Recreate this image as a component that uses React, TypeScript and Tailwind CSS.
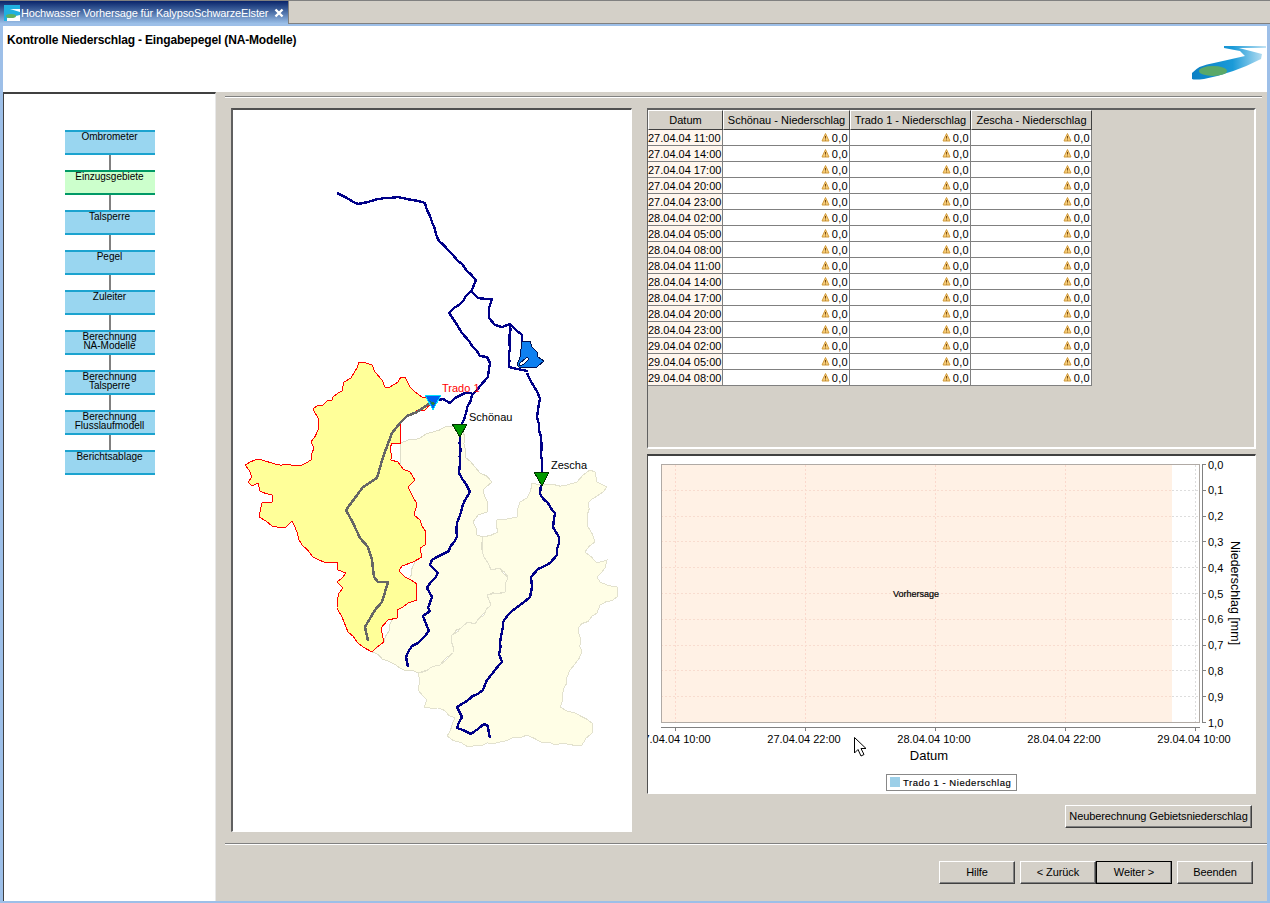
import React from "react";

const steps = [
  ["Ombrometer"],
  ["Einzugsgebiete"],
  ["Talsperre"],
  ["Pegel"],
  ["Zuleiter"],
  ["Berechnung", "NA-Modelle"],
  ["Berechnung", "Talsperre"],
  ["Berechnung", "Flusslaufmodell"],
  ["Berichtsablage"],
];

const dates = [
  "27.04.04 11:00",
  "27.04.04 14:00",
  "27.04.04 17:00",
  "27.04.04 20:00",
  "27.04.04 23:00",
  "28.04.04 02:00",
  "28.04.04 05:00",
  "28.04.04 08:00",
  "28.04.04 11:00",
  "28.04.04 14:00",
  "28.04.04 17:00",
  "28.04.04 20:00",
  "28.04.04 23:00",
  "29.04.04 02:00",
  "29.04.04 05:00",
  "29.04.04 08:00",
];

const headers = ["Datum", "Schönau - Niederschlag", "Trado 1 - Niederschlag", "Zescha - Niederschlag"];

// map outlines, in page pixels
const yellowArea =
  "313,409 318,405 323,405 328,400 332,400 333,397 338,393 342,391 344,382 351,378 357,368 359,362 363,362 372,365 375,372 382,380 385,387 390,387 398,382 401,377 405,377 410,387 415,392 422,397 428,398 434,402 425,410 418,410 407,415 401,422 401,443 392,443 390,448 391,460 398,462 403,469 410,472 415,480 408,487 413,497 417,504 414,515 420,520 426,532 425,545 420,548 422,557 413,562 402,566 399,571 405,577 417,584 417,600 408,603 397,610 397,618 388,620 381,628 384,642 372,652 363,647 348,632 342,617 337,608 339,593 343,588 337,582 346,573 338,570 337,562 324,562 313,557 302,545 292,521 286,527 272,526 259,517 262,503 272,502 272,495 260,491 258,483 252,486 248,482 252,477 245,465 258,459 275,464 300,466 311,460 314,448 311,442 318,430 319,420";
const paleMiddle =
  "401,443 408,440 420,438 433,432 445,427 458,425 465,437 465,457 475,467 492,482 483,490 488,503 487,512 478,515 473,522 477,535 483,537 482,550 491,570 500,568 508,577 505,592 487,595 491,605 475,624 468,622 452,635 453,653 440,665 418,673 400,668 372,652 384,642 400,600 420,550 400,480";
const paleRight =
  "483,537 498,532 497,520 517,517 520,502 527,498 532,483 540,485 567,485 577,482 590,470 595,472 597,482 607,487 603,492 588,503 588,527 595,542 585,552 597,563 607,560 605,568 597,577 600,582 617,587 617,597 600,605 597,613 578,628 582,652 567,677 560,707 575,713 592,723 592,733 582,745 543,743 527,735 500,742 468,747 447,736 455,718 438,708 424,707 427,700 418,690 420,680 418,673 440,665 453,653 452,635 468,622 475,624 491,605 487,595 505,592 508,577 500,568 491,570 482,550";
const grayRiver =
  "430,403 417,412 407,416 400,423 392,433 383,457 377,478 363,487 346,510 353,523 360,538 368,547 372,560 374,577 378,582 388,582 382,602 375,610 365,627 368,641";
const rivers = [
  "337,193 347,198 358,204 368,202 385,198 398,197 412,200 425,203 432,222 439,241 453,255 476,280 472,290 465,297 464,300 449,313 462,333 469,341 480,356 487,357 490,363 488,377 477,390 472,395 462,424",
  "472,393 465,393 455,398 450,403 443,399 438,400 433,398",
  "472,292 478,298 492,299 489,308 489,318 495,325 502,327 510,324 509,367 517,369 528,371",
  "510,324 522,335 522,342",
  "527,373 535,388 540,399 537,417 541,437 542,473",
  "460,437 460,463 459,473 470,492 465,500 457,523 457,537 450,547 449,551 432,560 430,565 438,573 427,588 432,597 428,608 430,611 423,616 429,631 418,643 412,646 406,657 408,667",
  "541,485 540,494 555,513 553,527 559,537 557,555 550,563 538,569 531,577 532,587 530,597 520,605 512,611 503,622 499,654 502,662 487,680 483,690 457,707 462,717 457,728 471,734 484,724 488,726 490,738",
];
const lake =
  "522,342 530,341 532,347 537,352 538,357 544,361 537,367 528,367 520,368 517,365 520,357";

// long straight pieces get small wiggles so the outlines look digitised
function roughen(points: string, amount: number) {
  const pts = points.split(" ").map((p) => p.split(",").map(Number));
  const out: string[] = [];
  let n = 0;
  pts.forEach(([x, y], i) => {
    out.push(`${x},${y}`);
    const next = pts[i + 1];
    if (!next) return;
    const dx = next[0] - x;
    const dy = next[1] - y;
    const len = Math.hypot(dx, dy);
    const parts = Math.floor(len / 6);
    for (let k = 1; k < parts; k++) {
      n++;
      const off = Math.sin(n * 2.3) * amount;
      const px = x + (dx * k) / parts - (dy / len) * off;
      const py = y + (dy * k) / parts + (dx / len) * off;
      out.push(`${px.toFixed(1)},${py.toFixed(1)}`);
    }
  });
  return out.join(" ");
}

function Warn() {
  return (
    <svg width="9" height="9" viewBox="0 0 9 9" className="mb-[1px] shrink-0">
      <path d="M4.5 .5 L8 8 H1 Z" fill="#f8cf7a" stroke="#d09a3c" />
      <path d="M4.5 3 V5.6 M4.5 6.6 V7.4" stroke="#7a4a10" />
    </svg>
  );
}

function WinButton({ label, active, width }: { label: string; active?: boolean; width: string }) {
  return (
    <button
      className={`${width} h-[23px] bg-[#d4d0c8] text-[11px] tracking-[-0.1px] whitespace-nowrap text-black border border-t-white border-l-white border-r-[#404040] border-b-[#404040] shadow-[inset_-1px_-1px_0_#808080] ${
        active ? "outline outline-1 outline-black -outline-offset-1" : ""
      }`}
    >
      {label}
    </button>
  );
}

function FlowStep({ lines, active }: { lines: string[]; active: boolean }) {
  return (
    <div
      className={`w-[90px] h-[25px] border-y-2 text-center text-[10px] leading-[9px] text-black ${
        active ? "bg-[#ccffcc] border-[#009966]" : "bg-[#99d6f0] border-[#1ba3cf]"
      }`}
    >
      {lines.map((l) => (
        <div key={l}>{l}</div>
      ))}
    </div>
  );
}

function MapView() {
  return (
    <svg viewBox="233 110 398 721" width="398" height="721" shapeRendering="crispEdges" className="block bg-white">
      <polygon points={roughen(paleMiddle, 1.2)} fill="#fffee6" stroke="#deddc9" />
      <polygon points={roughen(paleRight, 1.2)} fill="#fffee6" stroke="#e2e1ce" />
      <polygon points={roughen(yellowArea, 0.9)} fill="#ffff99" stroke="#ff0000" />
      <polyline points={grayRiver} fill="none" stroke="#666666" strokeWidth="2.5" />
      {rivers.map((r) => (
        <polyline key={r} points={roughen(r, 0.6)} fill="none" stroke="#000088" strokeWidth="2.4" />
      ))}
      <polygon points={lake} fill="#0f80f0" stroke="#001050" />
      <path d="M519 364 L527 357 L529 359 L524 364 L520 366 Z" fill="#ffffff" stroke="#001050" />
      <polygon points="425,395 441,395 433,410" fill="#0060f0" stroke="#00e0ff" />
      <path d="M430 401 L435 403 L433 406 Z" fill="#208040" />
      <polygon points="452,424 467,424 460,437" fill="#009900" stroke="#003300" />
      <polygon points="534,472 549,472 542,486" fill="#009900" stroke="#003300" />
      <text x="442" y="392" fontSize="11" fill="#ff0000">Trado 1</text>
      <text x="469" y="421" fontSize="11" fill="#000000">Schönau</text>
      <text x="551" y="469" fontSize="11" fill="#000000">Zescha</text>
    </svg>
  );
}

function ChartView() {
  const xs = [675, 805, 935, 1065, 1195];
  const xLabels = ["27.04.04 10:00", "27.04.04 22:00", "28.04.04 10:00", "28.04.04 22:00", "29.04.04 10:00"];
  const yLabels = ["0,0", "0,1", "0,2", "0,3", "0,4", "0,5", "0,6", "0,7", "0,8", "0,9", "1,0"];
  return (
    <svg viewBox="648 456 607 337" width="607" height="337" className="block bg-white">
      <g shapeRendering="crispEdges">
        <rect x="661" y="465" width="511" height="258" fill="#fff1e5" />
        {xs.map((x) => (
          <line key={x} x1={x + 0.5} x2={x + 0.5} y1="465" y2="723" stroke={x === 1195 ? "#dddddd" : "#fbd8cc"} strokeDasharray="2 2" />
        ))}
        {yLabels.map((l, i) => (
          <g key={l}>
            {i > 0 && i < 10 && (
              <>
                <line x1="661" x2="1172" y1={464.5 + i * 25.8} y2={464.5 + i * 25.8} stroke="#f8dccf" strokeDasharray="2 2" />
                <line x1="1172" x2="1200" y1={464.5 + i * 25.8} y2={464.5 + i * 25.8} stroke="#dddddd" strokeDasharray="2 2" />
              </>
            )}
            <line x1="1202" x2="1206" y1={464.5 + i * 25.8} y2={464.5 + i * 25.8} stroke="#808080" />
          </g>
        ))}
        <rect x="661.5" y="464.5" width="538" height="258" fill="none" stroke="#b0aaa5" />
        <line x1="1202.5" x2="1202.5" y1="464" y2="723" stroke="#808080" />
        <line x1="661" x2="1200" y1="727.5" y2="727.5" stroke="#808080" />
        {xs.map((x) => (
          <line key={x} x1={x + 0.5} x2={x + 0.5} y1="727" y2="731" stroke="#808080" />
        ))}
      </g>
      {yLabels.map((l, i) => (
        <text key={l} x="1208" y={468.5 + i * 25.8} fontSize="11" fill="#000000">{l}</text>
      ))}
      {xLabels.map((l, i) => (
        <text key={l} x={xs[i] - 1} y="743" fontSize="11" textAnchor="middle" fill="#000000">{l}</text>
      ))}
      <text x="929" y="760" fontSize="13" textAnchor="middle" fill="#000000">Datum</text>
      <text transform="translate(1231 593) rotate(90)" fontSize="12.5" textAnchor="middle" fill="#000000">Niederschlag [mm]</text>
      <text x="916" y="597" fontSize="9" textAnchor="middle" fill="#000000" stroke="#000000" strokeWidth="0.2">Vorhersage</text>
      <rect x="886.5" y="774.5" width="130" height="16" fill="#ffffff" stroke="#888888" shapeRendering="crispEdges" />
      <rect x="890" y="777" width="10" height="10" fill="#9ccfe8" />
      <text x="903" y="786" fontSize="9.5" letterSpacing="0.55" fill="#000000" stroke="#000000" strokeWidth="0.15">Trado 1 - Niederschlag</text>
      {/* mouse pointer */}
      <path d="M854.5 737.5 V753 L858 749.5 L861 756 L864 754.5 L861 748.5 L866 748.5 Z" fill="#ffffff" stroke="#000000" />
    </svg>
  );
}

export default function App() {
  return (
    <div className="w-[1270px] h-[903px] overflow-hidden bg-[#d4d0c8] flex flex-col font-['Liberation_Sans',Arial,sans-serif] text-black">
      {/* tab strip */}
      <div className="h-[24px] shrink-0 flex border-t border-t-[#808080] border-b border-b-[#808080]">
        <div className="w-[289px] h-[24px] flex items-center pl-[4px] bg-gradient-to-b from-[#0a246a] to-[#a6caf0] border-r border-r-[#808080]">
          <svg width="16" height="16" viewBox="0 0 16 16" className="shrink-0">
            <rect width="16" height="16" fill="#ffffff" />
            <path d="M0 0 H16 V4 L6 4 L16 7 V10 L3 13 V16 H0 Z" fill="#20b0e0" />
            <ellipse cx="7" cy="11" rx="5" ry="2" fill="#60b060" />
          </svg>
          <span className="w-[250px] ml-[1px] text-[11px] tracking-[-0.15px] text-white whitespace-nowrap">Hochwasser Vorhersage für KalypsoSchwarzeElster</span>
          <svg width="10" height="10" viewBox="0 0 10 10" className="ml-[3px] shrink-0">
            <path d="M1.5 1.5 L8.5 8.5 M8.5 1.5 L1.5 8.5" stroke="#ffffff" strokeWidth="2.4" />
          </svg>
        </div>
      </div>

      {/* blue frame */}
      <div className="flex-1 flex flex-col border-x-[3px] border-x-[#9dbfe8] border-b-2 border-b-[#9dbfe8] min-h-0">
        <div className="h-[2px] shrink-0 bg-[#9dbfe8]" />
        <div className="h-[66px] shrink-0 bg-white relative pl-[4px] pt-[7px]">
          <div className="text-[12px] leading-[14px] font-bold tracking-[-0.16px]">Kontrolle Niederschlag - Eingabepegel (NA-Modelle)</div>
          <svg width="76" height="36" viewBox="1192 44 76 36" className="absolute right-0 top-[19px]">
            <defs>
              <linearGradient id="swoosh" x1="0" x2="1" y1="0" y2="0">
                <stop offset="0" stopColor="#0a7fc4" />
                <stop offset="0.55" stopColor="#1a9ad8" />
                <stop offset="1" stopColor="#c5e4f4" />
              </linearGradient>
            </defs>
            <path
              d="M1225 45 L1267 45 L1267 47 L1240 47 L1263 53 L1262 58 Q1235 72 1205 78 Q1195 79 1193 78 L1193 72 Q1200 64 1215 62 L1246 55 L1241 50 L1225 47 Z"
              fill="url(#swoosh)"
            />
            <ellipse cx="1214" cy="70" rx="14" ry="5" fill="#5aa868" />
          </svg>
        </div>

        <div className="flex-1 flex min-h-0">
          {/* workflow column */}
          <div className="w-[213px] shrink-0 bg-white border-t-2 border-t-[#404040] border-l border-l-[#404040] border-r border-r-[#e8e8e8] flex flex-col items-center pt-[36px]">
            {steps.map((s, i) => (
              <React.Fragment key={s.join()}>
                {i > 0 && <div className="w-[2px] h-[15px] bg-[#808080]" />}
                <FlowStep lines={s} active={i === 1} />
              </React.Fragment>
            ))}
          </div>

          <div className="flex-1 flex flex-col min-w-0">
            <div className="h-[2px] mt-[4px] ml-[9px] mr-[5px] border-t border-t-[#808080] border-b border-b-white shrink-0" />

            <div className="flex mt-[10px] ml-[15px] shrink-0">
              <div className="w-[401px] h-[724px] border-t-2 border-l-2 border-t-[#505050] border-l-[#606060] border-r border-b border-r-white border-b-white overflow-hidden">
                <MapView />
              </div>

              <div className="ml-[15px] w-[609px] flex flex-col">
                <div className="h-[341px] border-t-2 border-l border-t-[#606060] border-l-[#606060] border-r-2 border-b-2 border-r-white border-b-white">
                  <div className="grid grid-cols-[75px_127px_121px_121px] w-[444px] text-[11px]">
                    {headers.map((h) => (
                      <div
                        key={h}
                        className="h-[20px] flex items-center justify-center bg-[#d4d0c8] whitespace-nowrap border border-t-white border-l-white border-r-[#404040] border-b-[#404040]"
                      >
                        {h}
                      </div>
                    ))}
                    {dates.map((d) => (
                      <React.Fragment key={d}>
                        <div className="h-[16px] bg-[#fff6ee] border-r border-b border-[#808080] pl-[0px] pt-[1px] leading-[15px] whitespace-nowrap">{d}</div>
                        {[0, 1, 2].map((c) => (
                          <div
                            key={c}
                            className="h-[16px] bg-white border-r border-b border-[#808080] flex items-center justify-end gap-[2px] pr-[1px]"
                          >
                            <Warn />
                            <span className="pt-[1px] tracking-[0.3px]">0,0</span>
                          </div>
                        ))}
                      </React.Fragment>
                    ))}
                  </div>
                </div>

                <div className="mt-[5px] h-[340px] border-t-2 border-l border-t-[#404040] border-l-[#505050] border-r border-b border-r-white border-b-white overflow-hidden">
                  <ChartView />
                </div>

                <div className="mt-[11px] pr-[4px] flex justify-end">
                  <WinButton label="Neuberechnung Gebietsniederschlag" width="w-[187px]" />
                </div>
              </div>
            </div>

            <div className="h-[2px] mt-[11px] ml-[9px] border-t border-t-[#808080] border-b border-b-white shrink-0" />

            <div className="mt-[16px] pr-[14px] flex justify-end">
              <WinButton label="Hilfe" width="w-[76px]" />
              <div className="w-[5px]" />
              <WinButton label="< Zurück" width="w-[76px]" />
              <WinButton label="Weiter >" width="w-[76px]" active />
              <div className="w-[5px]" />
              <WinButton label="Beenden" width="w-[76px]" />
            </div>
          </div>
        </div>
      </div>
    </div>
  );
}
